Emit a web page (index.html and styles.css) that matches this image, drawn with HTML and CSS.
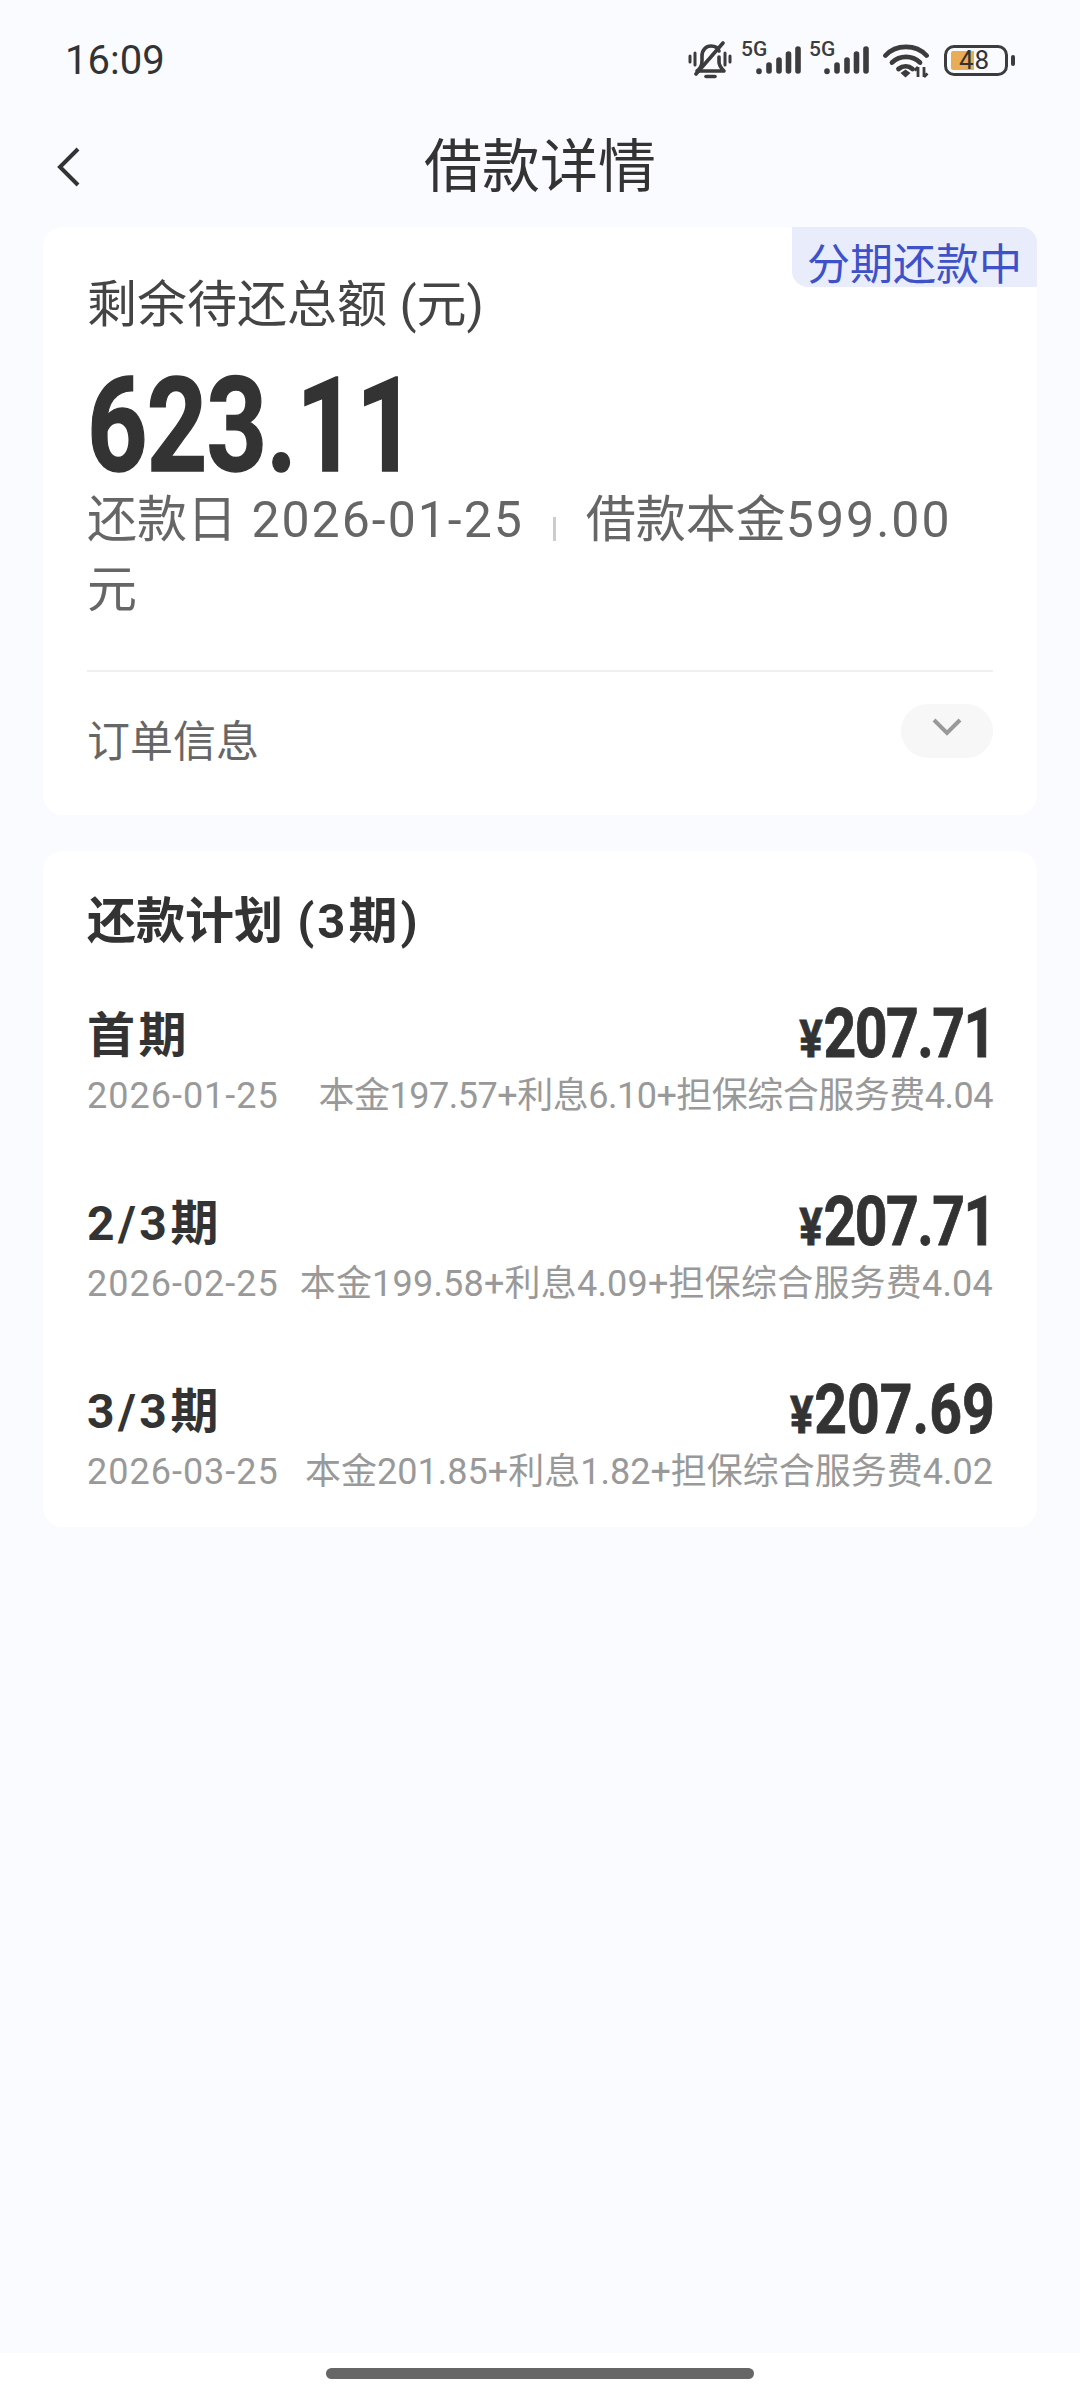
FILE: index.html
```html
<!DOCTYPE html>
<html lang="zh-CN">
<head>
<meta charset="utf-8">
<title>借款详情</title>
<link rel="stylesheet" href="styles.css">
</head>
<body>
<div class="screen">
  <div class="status">
    <span class="time">16:09</span>
    <div class="status-icons">
      <svg class="ic-bell" viewBox="0 0 44 38" width="44" height="38">
        <g fill="none" stroke="#3c3c3c" stroke-linecap="round" stroke-linejoin="round">
          <path stroke-width="3.6" d="M9 30c4-3 5-6 5-10v-5c0-6 4-10 9-10 4 0 7 2 8 5M31 16v5c0 4 2 6 5 9H9"/>
          <path stroke-width="3.6" d="M8 33 35 2"/>
          <path stroke-width="3.6" d="M18 35.500h9"/>
          <path stroke-width="3" d="M2 15v6M7 12v12M37 12v12M42 15v6"/>
        </g>
      </svg>
      <div class="net">
        <span class="net-label">5G</span>
        <svg viewBox="0 0 46 30" width="46" height="30"><g fill="none" stroke="#3c3c3c" stroke-width="5.600" stroke-linecap="round"><path d="M3 26v.5M13 20v6M23 15v11M32.500 9v17M42 4v22"/></g></svg>
      </div>
      <div class="net">
        <span class="net-label">5G</span>
        <svg viewBox="0 0 46 30" width="46" height="30"><g fill="none" stroke="#3c3c3c" stroke-width="5.600" stroke-linecap="round"><path d="M3 26v.5M13 20v6M23 15v11M32.500 9v17M42 4v22"/></g></svg>
      </div>
      <svg class="ic-wifi" viewBox="0 0 46 35" width="46" height="35">
        <g fill="none" stroke="#3c3c3c" stroke-width="4.800" stroke-linecap="round">
          <path d="M2.500 12.500C13 1 33 1 43.500 12.500"/>
          <path d="M9 19.500c8-7.500 20-7.500 28 0"/>
          <path d="M15.500 26c4.500-3.500 10-3.500 14 0"/>
        </g>
        <path d="M17.500 30l5-3.500 5 3.500-5 4.500z" fill="#3c3c3c"/>
        <path d="M35 24v10M35 24l-3.500 3.500M41 34V24M41 34l3.500-3.500" fill="none" stroke="#3c3c3c" stroke-width="2.800"/>
      </svg>
      <div class="battery">
        <div class="battery-body">
          <span class="battery-fill"></span>
          <span class="battery-num">48</span>
        </div>
        <span class="battery-nub"></span>
      </div>
    </div>
  </div>

  <header class="nav">
    <svg class="back" viewBox="0 0 24 40" width="24" height="40"><path d="M21 2 3 20l18 18" fill="none" stroke="#333" stroke-width="4"/></svg>
    <h1 class="nav-title">借款详情</h1>
  </header>

  <section class="card summary">
    <span class="badge">分期还款中</span>
    <p class="sum-label">剩余待还总额 (元)</p>
    <p class="sum-amount">623.11</p>
    <p class="sum-meta">还款日 <span class="num date">2026-01-25</span><span class="sep"></span>借款本金<span class="num">599.00</span>元</p>
    <div class="order">
      <span class="order-label">订单信息</span>
      <span class="toggle"><svg viewBox="0 0 30 18" width="30" height="18"><path d="M2 2l13 13L28 2" fill="none" stroke="#999" stroke-width="4"/></svg></span>
    </div>
  </section>

  <section class="card plan">
    <h2 class="plan-title">还款计划 <span class="plan-count">(3期)</span></h2>
    <div class="row first">
      <div class="row-top"><span class="row-name">首期</span><span class="row-amt tight"><span class="yen">¥</span>207.71</span></div>
      <div class="row-sub"><span class="row-date">2026-01-25</span><span class="detail narrow">本金197.57+利息6.10+担保综合服务费4.04</span></div>
    </div>
    <div class="row">
      <div class="row-top"><span class="row-name">2/3期</span><span class="row-amt tight"><span class="yen">¥</span>207.71</span></div>
      <div class="row-sub"><span class="row-date">2026-02-25</span><span class="detail wide">本金199.58+利息4.09+担保综合服务费4.04</span></div>
    </div>
    <div class="row">
      <div class="row-top"><span class="row-name">3/3期</span><span class="row-amt"><span class="yen">¥</span>207.69</span></div>
      <div class="row-sub"><span class="row-date">2026-03-25</span><span class="detail">本金201.85+利息1.82+担保综合服务费4.02</span></div>
    </div>
  </section>

  <div class="home-bar"><span class="home-pill"></span></div>
</div>
</body>
</html>
```
FILE: styles.css
```css
* { box-sizing: border-box; margin: 0; padding: 0; }
html, body { width: 1080px; height: 2400px; overflow: hidden; }
body {
  background: #fafbff;
  font-family: Roboto, "Noto Sans CJK SC", sans-serif;
  color: #333;
}
.screen { position: relative; width: 1080px; height: 2400px; display: flex; flex-direction: column; }

.status { height: 120px; padding: 0 65px; display: flex; justify-content: space-between; align-items: center; }
.time { padding-top: 2px; font-size: 40px; color: #333; line-height: 1; }
.status-icons { display: flex; align-items: center; }
.ic-bell { margin-right: 9px; }
.net { position: relative; width: 61px; height: 33px; margin: 0 7px 3px 0; display: flex; justify-content: flex-end; align-items: flex-end; }
.net:nth-of-type(2) { margin-right: 13px; }
.net-label { position: absolute; left: 0; top: -3px; font-size: 21px; font-weight: 500; line-height: 1; color: #3c3c3c; }
.ic-wifi { margin-right: 15px; }
.battery { display: flex; align-items: center; gap: 3px; }
.battery-body { position: relative; width: 64px; height: 31px; border: 3px solid #3c3c3c; border-radius: 10px; padding: 3px 4px; }
.battery-fill { display: block; width: 23px; height: 19px; background: #e9ac57; border-radius: 2px 0 0 2px; }
.battery-num { position: absolute; left: 12px; top: 0; font-size: 26px; line-height: 25px; color: #333; letter-spacing: 1px; }
.battery-nub { width: 4px; height: 11px; background: #3c3c3c; border-radius: 2px; }

.nav { position: relative; height: 107px; padding-bottom: 13px; display: flex; align-items: center; justify-content: center; }
.back { position: absolute; left: 57px; top: 27px; }
.nav-title { font-size: 58px; font-weight: 400; line-height: 1; color: #333; }

.card { position: relative; margin: 0 43px; background: #fff; border-radius: 20px; }
.summary { height: 588px; padding: 0 44px; }
.badge {
  position: absolute; right: 0; top: 0; width: 245px; height: 60px;
  background: #e9ecfa; border-radius: 0 16px 0 16px;
  color: #3f51c8; font-size: 43px; line-height: 76px; text-align: center;
}
.sum-label { padding-top: 43px; font-size: 50px; line-height: 70px; color: #444; }
.sum-amount {
  margin-top: 31px; font-size: 132px; font-weight: 700; line-height: 110px;
  letter-spacing: -1px; color: #333; transform: scaleX(0.8); transform-origin: left center;
  -webkit-text-stroke: 1.500px #333;
}
.sum-meta { width: 890px; margin-top: 4px; font-size: 50px; line-height: 70px; color: #666; }
.num { letter-spacing: 2px; }
.num.date { margin-left: 2px; }
.sep { display: inline-block; width: 3px; height: 24px; margin: 0 30px 0 29px; background: #ccc; vertical-align: -4px; }
.order { margin-top: 45px; height: 144px; border-top: 2px solid #f0f0f0; display: flex; justify-content: space-between; padding-top: 32px; }
.order-label { font-size: 43px; line-height: 76px; color: #666; }
.toggle { width: 92px; height: 54px; background: #f7f7f7; border-radius: 27px; display: flex; align-items: center; justify-content: center; padding-bottom: 8px; }

.plan { margin-top: 36px; height: 676px; padding: 0 44px; }
.plan-title { padding-top: 40px; font-size: 49px; font-weight: 700; line-height: 62px; color: #333; }
.plan-count { letter-spacing: 3px; margin-left: 2px; }
.row { margin-top: 70px; }
.row.first { margin-top: 49px; }
.row-top { display: flex; justify-content: space-between; align-items: center; height: 67px; }
.row-name { font-size: 48px; font-weight: 700; color: #333; line-height: 1; letter-spacing: 3.500px; }
.row-amt {
  display: inline-block; margin: 0 -2px 4px 0; font-size: 68px; font-weight: 700; color: #333;
  line-height: 1; transform: scaleX(0.84); transform-origin: right center;
  -webkit-text-stroke: 0.800px #333;
}
.row-amt.tight { letter-spacing: -1.800px; }
.yen { margin-right: 1px; font-size: 52px; letter-spacing: 0; }
.row-sub { padding-top: 3px; display: flex; justify-content: space-between; font-size: 36px; line-height: 48px; color: #999; }
.row-date { letter-spacing: 1px; }
.detail.narrow { letter-spacing: -0.500px; }
.detail.wide { letter-spacing: 0.200px; }

.home-bar { position: absolute; left: 0; right: 0; bottom: 0; height: 47px; background: #fff; display: flex; justify-content: center; padding-top: 15px; }
.home-pill { width: 428px; height: 11px; border-radius: 6px; background: #666; }
```
